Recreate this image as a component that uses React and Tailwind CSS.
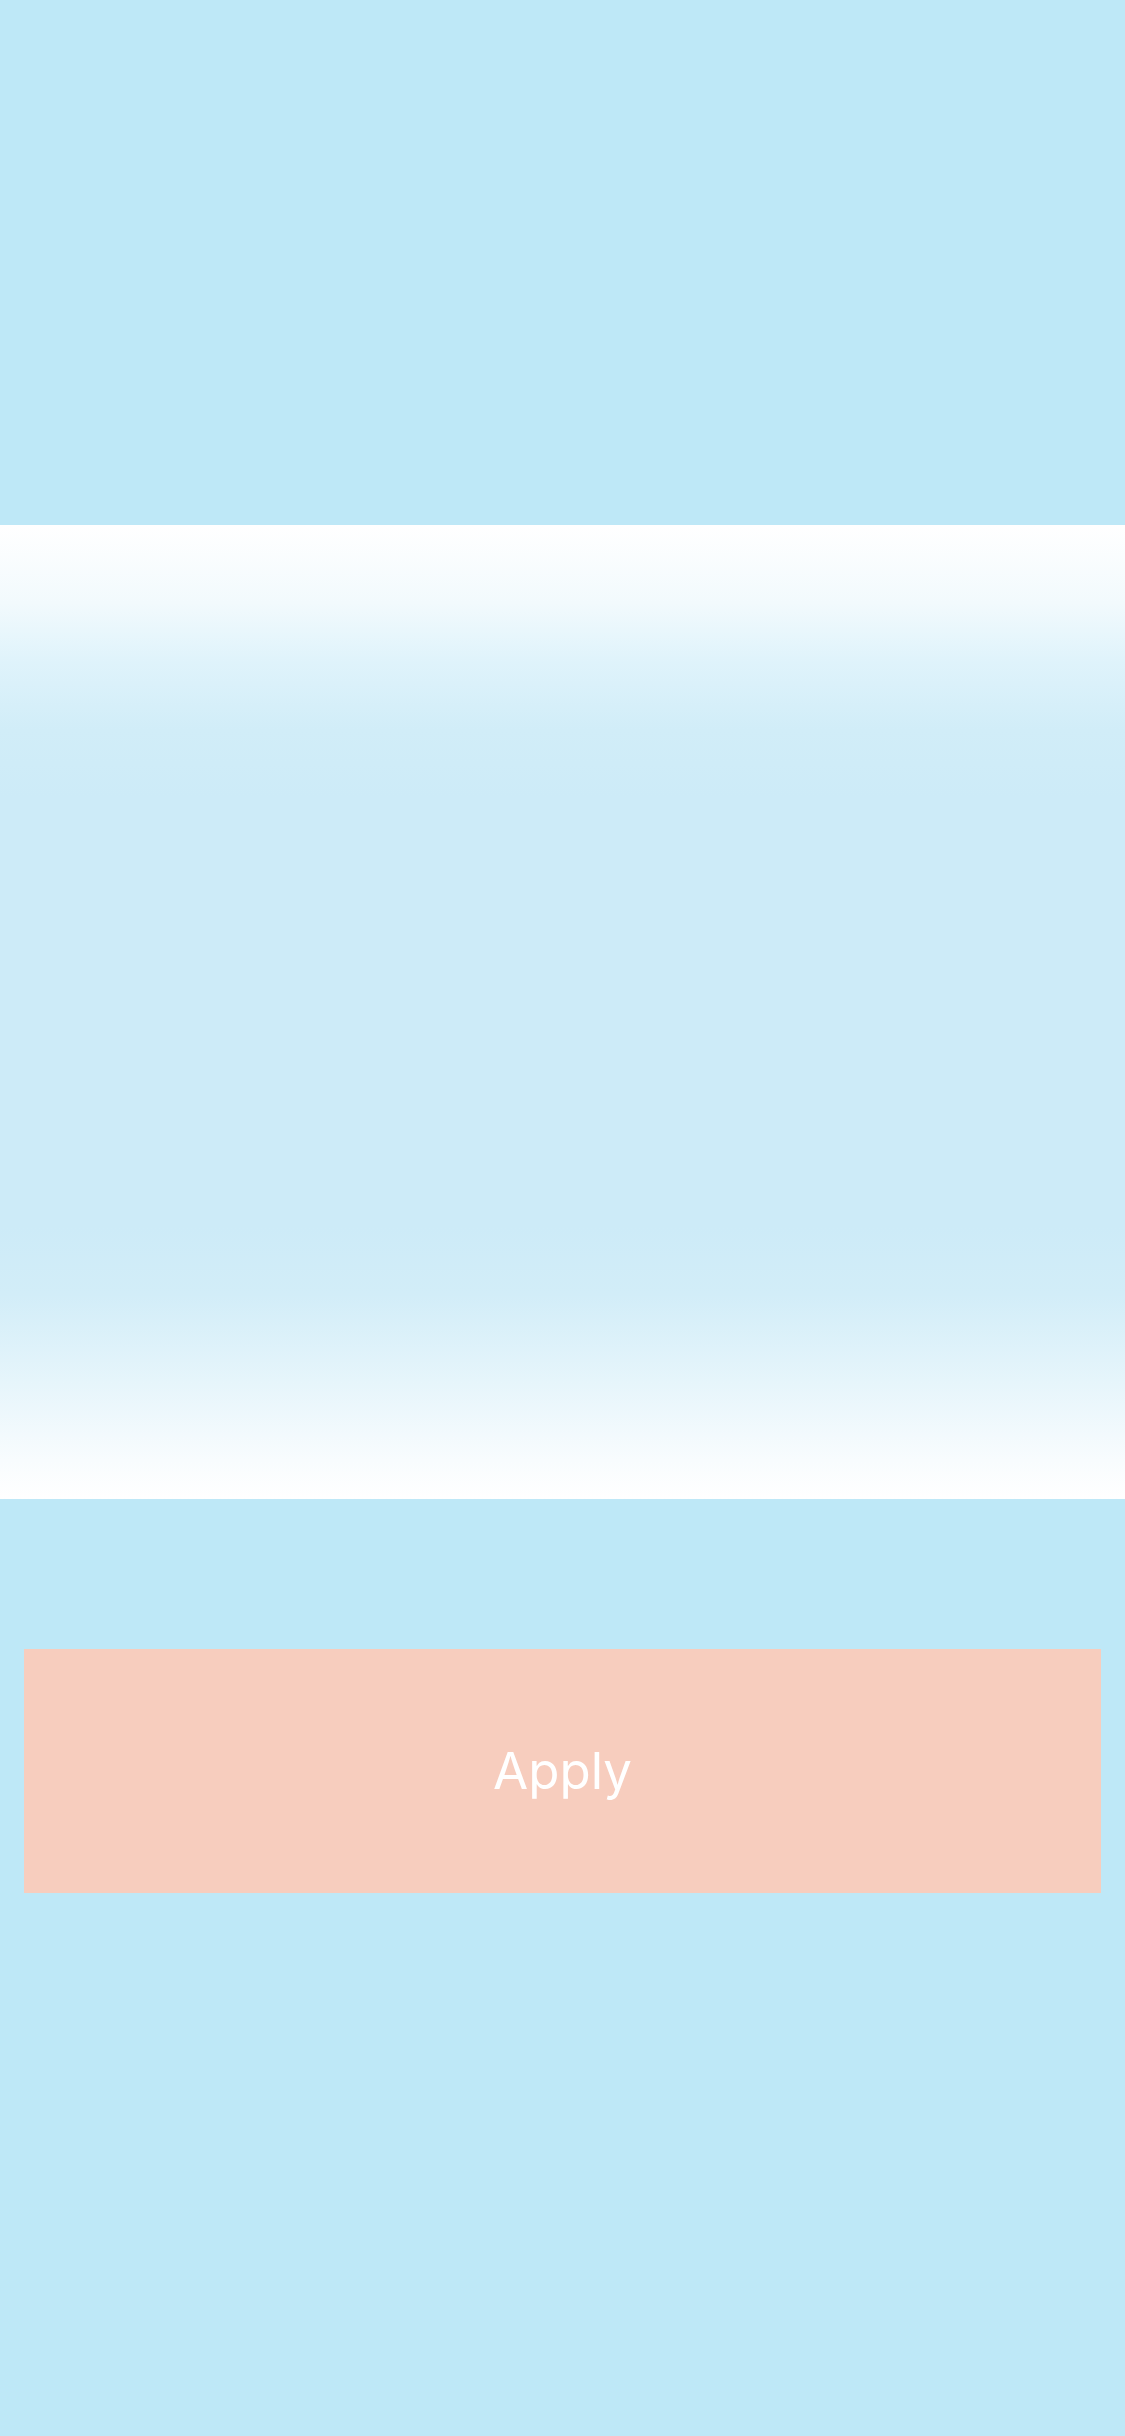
export default function App() {
  return (
    <div className="w-[1125px] h-[2436px] flex flex-col bg-[#bee8f7]" style={{ fontFamily: "Inter, 'Noto Sans', sans-serif" }}>
      <div className="h-[525px] shrink-0 bg-[#bee8f7]" />
      <div className="h-[974px] shrink-0 bg-[linear-gradient(to_bottom,#ffffff_0%,#f2fafd_8%,#dff3fb_14%,#d1edf8_21%,#cdebf8_28%,#cdebf8_72%,#d2edf8_79%,#e6f5fb_88%,#f8fcfe_96%,#ffffff_100%)]" />
      <div className="pt-[150px] px-[24px]">
        <div className="h-[244px] w-[1077px] bg-[#f7cdbe] flex items-center justify-center">
          <span className="text-white text-[51px] font-normal tracking-[0px]">Apply</span>
        </div>
      </div>
    </div>
  );
}
